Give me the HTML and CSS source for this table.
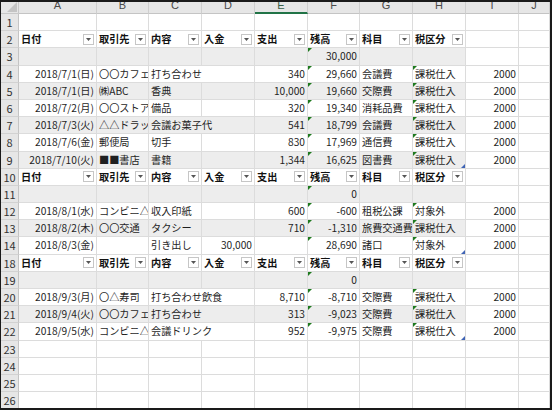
FILE: index.html
```html
<!DOCTYPE html>
<html lang="ja">
<head>
<meta charset="utf-8">
<link rel="stylesheet" href="styles.css">
</head>
<body>
<div class="frame">
<div class="sheet">
<div class="corner"><svg class="corner-tri" width="10" height="10" viewBox="0 0 10 10"><path d="M10 0 L10 10 L0 10 Z" fill="#c4c4c4"/></svg></div>
<div class="ch">A</div><div class="ch">B</div><div class="ch">C</div><div class="ch">D</div><div class="ch sel">E</div><div class="ch">F</div><div class="ch">G</div><div class="ch">H</div><div class="ch">I</div><div class="ch">J</div>

<div class="rh">1</div><div class="c"></div><div class="c"></div><div class="c"></div><div class="c"></div><div class="c"></div><div class="c"></div><div class="c"></div><div class="c"></div><div class="c"></div><div class="c"></div>

<div class="rh">2</div>
<div class="hd"><span>日付</span><span class="fb"><svg width="5" height="3" viewBox="0 0 5 3"><path d="M0 0H5L2.5 3Z" fill="#555"/></svg></span></div>
<div class="hd"><span>取引先</span><span class="fb"><svg width="5" height="3" viewBox="0 0 5 3"><path d="M0 0H5L2.5 3Z" fill="#555"/></svg></span></div>
<div class="hd"><span>内容</span><span class="fb"><svg width="5" height="3" viewBox="0 0 5 3"><path d="M0 0H5L2.5 3Z" fill="#555"/></svg></span></div>
<div class="hd"><span>入金</span><span class="fb"><svg width="5" height="3" viewBox="0 0 5 3"><path d="M0 0H5L2.5 3Z" fill="#555"/></svg></span></div>
<div class="hd"><span>支出</span><span class="fb"><svg width="5" height="3" viewBox="0 0 5 3"><path d="M0 0H5L2.5 3Z" fill="#555"/></svg></span></div>
<div class="hd"><span>残高</span><span class="fb"><svg width="5" height="3" viewBox="0 0 5 3"><path d="M0 0H5L2.5 3Z" fill="#555"/></svg></span></div>
<div class="hd"><span>科目</span><span class="fb"><svg width="5" height="3" viewBox="0 0 5 3"><path d="M0 0H5L2.5 3Z" fill="#555"/></svg></span></div>
<div class="hd"><span>税区分</span><span class="fb"><svg width="5" height="3" viewBox="0 0 5 3"><path d="M0 0H5L2.5 3Z" fill="#555"/></svg></span></div>
<div class="c"></div><div class="c"></div>

<div class="rh">3</div><div class="g"></div><div class="g"></div><div class="g"></div><div class="g"></div><div class="g"></div><div class="g r tri">30,000</div><div class="g"></div><div class="g"></div><div class="c"></div><div class="c"></div>

<div class="rh">4</div><div class="w r">2018/7/1(日)</div><div class="w l">〇〇カフェ</div><div class="w l sp2">打ち合わせ</div><div class="w r">340</div><div class="w r tri">29,660</div><div class="w l">会議費</div><div class="w l tri">課税仕入</div><div class="c r">2000</div><div class="c"></div>

<div class="rh">5</div><div class="g r">2018/7/1(日)</div><div class="g l">㈱ABC</div><div class="g l">香典</div><div class="g"></div><div class="g r">10,000</div><div class="g r tri">19,660</div><div class="g l">交際費</div><div class="g l tri">課税仕入</div><div class="c r">2000</div><div class="c"></div>

<div class="rh">6</div><div class="w r">2018/7/2(月)</div><div class="w l">〇〇ストア</div><div class="w l">備品</div><div class="w"></div><div class="w r">320</div><div class="w r tri">19,340</div><div class="w l">消耗品費</div><div class="w l tri">課税仕入</div><div class="c r">2000</div><div class="c"></div>

<div class="rh">7</div><div class="g r">2018/7/3(火)</div><div class="g l">△△ドラッ</div><div class="g l sp2">会議お菓子代</div><div class="g r">541</div><div class="g r tri">18,799</div><div class="g l">会議費</div><div class="g l tri">課税仕入</div><div class="c r">2000</div><div class="c"></div>

<div class="rh">8</div><div class="w r">2018/7/6(金)</div><div class="w l">郵便局</div><div class="w l">切手</div><div class="w"></div><div class="w r">830</div><div class="w r tri">17,969</div><div class="w l">通信費</div><div class="w l tri">課税仕入</div><div class="c r">2000</div><div class="c"></div>

<div class="rh">9</div><div class="g r">2018/7/10(火)</div><div class="g l">■■書店</div><div class="g l">書籍</div><div class="g"></div><div class="g r">1,344</div><div class="g r tri">16,625</div><div class="g l">図書費</div><div class="g l tri hdl">課税仕入</div><div class="c r">2000</div><div class="c"></div>

<div class="rh">10</div>
<div class="hd"><span>日付</span><span class="fb"><svg width="5" height="3" viewBox="0 0 5 3"><path d="M0 0H5L2.5 3Z" fill="#555"/></svg></span></div>
<div class="hd"><span>取引先</span><span class="fb"><svg width="5" height="3" viewBox="0 0 5 3"><path d="M0 0H5L2.5 3Z" fill="#555"/></svg></span></div>
<div class="hd"><span>内容</span><span class="fb"><svg width="5" height="3" viewBox="0 0 5 3"><path d="M0 0H5L2.5 3Z" fill="#555"/></svg></span></div>
<div class="hd"><span>入金</span><span class="fb"><svg width="5" height="3" viewBox="0 0 5 3"><path d="M0 0H5L2.5 3Z" fill="#555"/></svg></span></div>
<div class="hd"><span>支出</span><span class="fb"><svg width="5" height="3" viewBox="0 0 5 3"><path d="M0 0H5L2.5 3Z" fill="#555"/></svg></span></div>
<div class="hd"><span>残高</span><span class="fb"><svg width="5" height="3" viewBox="0 0 5 3"><path d="M0 0H5L2.5 3Z" fill="#555"/></svg></span></div>
<div class="hd"><span>科目</span><span class="fb"><svg width="5" height="3" viewBox="0 0 5 3"><path d="M0 0H5L2.5 3Z" fill="#555"/></svg></span></div>
<div class="hd"><span>税区分</span><span class="fb"><svg width="5" height="3" viewBox="0 0 5 3"><path d="M0 0H5L2.5 3Z" fill="#555"/></svg></span></div>
<div class="c"></div><div class="c"></div>

<div class="rh">11</div><div class="g"></div><div class="g"></div><div class="g"></div><div class="g"></div><div class="g"></div><div class="g r tri">0</div><div class="g"></div><div class="g"></div><div class="c"></div><div class="c"></div>

<div class="rh">12</div><div class="w r">2018/8/1(水)</div><div class="w l">コンビニ△</div><div class="w l">収入印紙</div><div class="w"></div><div class="w r">600</div><div class="w r tri">-600</div><div class="w l">租税公課</div><div class="w l tri">対象外</div><div class="c r">2000</div><div class="c"></div>

<div class="rh">13</div><div class="g r">2018/8/2(木)</div><div class="g l">〇〇交通</div><div class="g l">タクシー</div><div class="g"></div><div class="g r">710</div><div class="g r tri">-1,310</div><div class="g l">旅費交通費</div><div class="g l tri">課税仕入</div><div class="c r">2000</div><div class="c"></div>

<div class="rh">14</div><div class="w r">2018/8/3(金)</div><div class="w"></div><div class="w l">引き出し</div><div class="w r">30,000</div><div class="w"></div><div class="w r tri">28,690</div><div class="w l">諸口</div><div class="w l tri hdl">対象外</div><div class="c r">2000</div><div class="c"></div>

<div class="rh">18</div>
<div class="hd"><span>日付</span><span class="fb"><svg width="5" height="3" viewBox="0 0 5 3"><path d="M0 0H5L2.5 3Z" fill="#555"/></svg></span></div>
<div class="hd"><span>取引先</span><span class="fb"><svg width="5" height="3" viewBox="0 0 5 3"><path d="M0 0H5L2.5 3Z" fill="#555"/></svg></span></div>
<div class="hd"><span>内容</span><span class="fb"><svg width="5" height="3" viewBox="0 0 5 3"><path d="M0 0H5L2.5 3Z" fill="#555"/></svg></span></div>
<div class="hd"><span>入金</span><span class="fb"><svg width="5" height="3" viewBox="0 0 5 3"><path d="M0 0H5L2.5 3Z" fill="#555"/></svg></span></div>
<div class="hd"><span>支出</span><span class="fb"><svg width="5" height="3" viewBox="0 0 5 3"><path d="M0 0H5L2.5 3Z" fill="#555"/></svg></span></div>
<div class="hd"><span>残高</span><span class="fb"><svg width="5" height="3" viewBox="0 0 5 3"><path d="M0 0H5L2.5 3Z" fill="#555"/></svg></span></div>
<div class="hd"><span>科目</span><span class="fb"><svg width="5" height="3" viewBox="0 0 5 3"><path d="M0 0H5L2.5 3Z" fill="#555"/></svg></span></div>
<div class="hd"><span>税区分</span><span class="fb"><svg width="5" height="3" viewBox="0 0 5 3"><path d="M0 0H5L2.5 3Z" fill="#555"/></svg></span></div>
<div class="c"></div><div class="c"></div>

<div class="rh">19</div><div class="g"></div><div class="g"></div><div class="g"></div><div class="g"></div><div class="g"></div><div class="g r tri">0</div><div class="g"></div><div class="g"></div><div class="c"></div><div class="c"></div>

<div class="rh">20</div><div class="w r">2018/9/3(月)</div><div class="w l">〇△寿司</div><div class="w l sp2">打ち合わせ飲食</div><div class="w r">8,710</div><div class="w r tri">-8,710</div><div class="w l">交際費</div><div class="w l tri">課税仕入</div><div class="c r">2000</div><div class="c"></div>

<div class="rh">21</div><div class="g r">2018/9/4(火)</div><div class="g l">〇〇カフェ</div><div class="g l sp2">打ち合わせ</div><div class="g r">313</div><div class="g r tri">-9,023</div><div class="g l">交際費</div><div class="g l tri">課税仕入</div><div class="c r">2000</div><div class="c"></div>

<div class="rh">22</div><div class="w r">2018/9/5(水)</div><div class="w l">コンビニ△</div><div class="w l sp2">会議ドリンク</div><div class="w r">952</div><div class="w r tri">-9,975</div><div class="w l">交際費</div><div class="w l tri hdl">課税仕入</div><div class="c r">2000</div><div class="c"></div>

<div class="rh">23</div><div class="c"></div><div class="c"></div><div class="c"></div><div class="c"></div><div class="c"></div><div class="c"></div><div class="c"></div><div class="c"></div><div class="c"></div><div class="c"></div>
<div class="rh">24</div><div class="c"></div><div class="c"></div><div class="c"></div><div class="c"></div><div class="c"></div><div class="c"></div><div class="c"></div><div class="c"></div><div class="c"></div><div class="c"></div>
<div class="rh">25</div><div class="c"></div><div class="c"></div><div class="c"></div><div class="c"></div><div class="c"></div><div class="c"></div><div class="c"></div><div class="c"></div><div class="c"></div><div class="c"></div>
<div class="rh">26</div><div class="c"></div><div class="c"></div><div class="c"></div><div class="c"></div><div class="c"></div><div class="c"></div><div class="c"></div><div class="c"></div><div class="c"></div><div class="c"></div>
</div>
</div>
</body>
</html>
```

FILE: styles.css
```css
html, body {
  margin: 0;
  padding: 0;
  background: #ffffff;
}

.frame {
  width: 552px;
  height: 410px;
  box-sizing: border-box;
  border-style: solid;
  border-color: #1a1a1a;
  border-width: 2px 2px 2px 1px;
  overflow: hidden;
  font-family: "Noto Sans CJK JP", "Noto Sans", sans-serif;
  font-size: 10.2px;
  color: #1f1f1f;
}

.sheet {
  display: grid;
  grid-template-columns: 18px 78px 52px 53px 53px 53px 52px 53px 53px 53px 1fr;
  grid-template-rows: 12px;
  grid-auto-rows: 17.2px;
}

.sheet > div {
  box-sizing: border-box;
  border-right: 1px solid #dcdcdc;
  border-bottom: 1px solid #dcdcdc;
  white-space: nowrap;
  overflow: hidden;
  line-height: 16px;
  min-width: 0;
}

.corner {
  background: #e6e6e6;
  display: flex;
  align-items: flex-end;
  justify-content: flex-end;
  border-color: #c8c8c8 !important;
}

.corner-tri {
  display: block;
  margin: 0 1px 1px 0;
}

.ch {
  background: #e6e6e6;
  border-right-color: #cfcfcf !important;
  border-bottom-color: #c4c4c4 !important;
  text-align: center;
  font-family: "Liberation Sans", sans-serif;
  font-size: 11px;
  line-height: 6px !important;
  color: #4a4a4a;
}

.ch.sel {
  border-bottom: 2px solid #217346 !important;
  color: #3a5f48;
}

.rh {
  background: #e6e6e6;
  border-right-color: #c4c4c4 !important;
  border-bottom-color: #d2d2d2 !important;
  text-align: center;
  font-size: 11px;
  color: #333333;
}

.c, .w {
  background: #ffffff;
}

.g {
  background: #ededed;
}

.l {
  padding-left: 2px;
  text-align: left;
}

.r {
  padding-right: 2px;
  text-align: right;
}

.sp2 {
  grid-column: span 2;
}

.hd {
  background: #ffffff;
  display: flex;
  align-items: center;
  justify-content: space-between;
  padding-left: 2px;
  padding-right: 2px;
  font-weight: bold;
  color: #111111;
}

.fb {
  flex: none;
  width: 11px;
  height: 11px;
  box-sizing: border-box;
  border: 1px solid #c6c6c6;
  background: #ffffff;
  display: flex;
  align-items: center;
  justify-content: center;
}

.fb svg {
  display: block;
}

.tri {
  position: relative;
}

.tri::before {
  content: "";
  position: absolute;
  left: 0;
  top: 0;
  border-style: solid;
  border-width: 4px 4px 0 0;
  border-color: #1e7a1e transparent transparent transparent;
}

.hdl::after {
  content: "";
  position: absolute;
  right: 0;
  bottom: 0;
  border-style: solid;
  border-width: 0 0 4px 4px;
  border-color: transparent transparent #3f64b5 transparent;
}
```
